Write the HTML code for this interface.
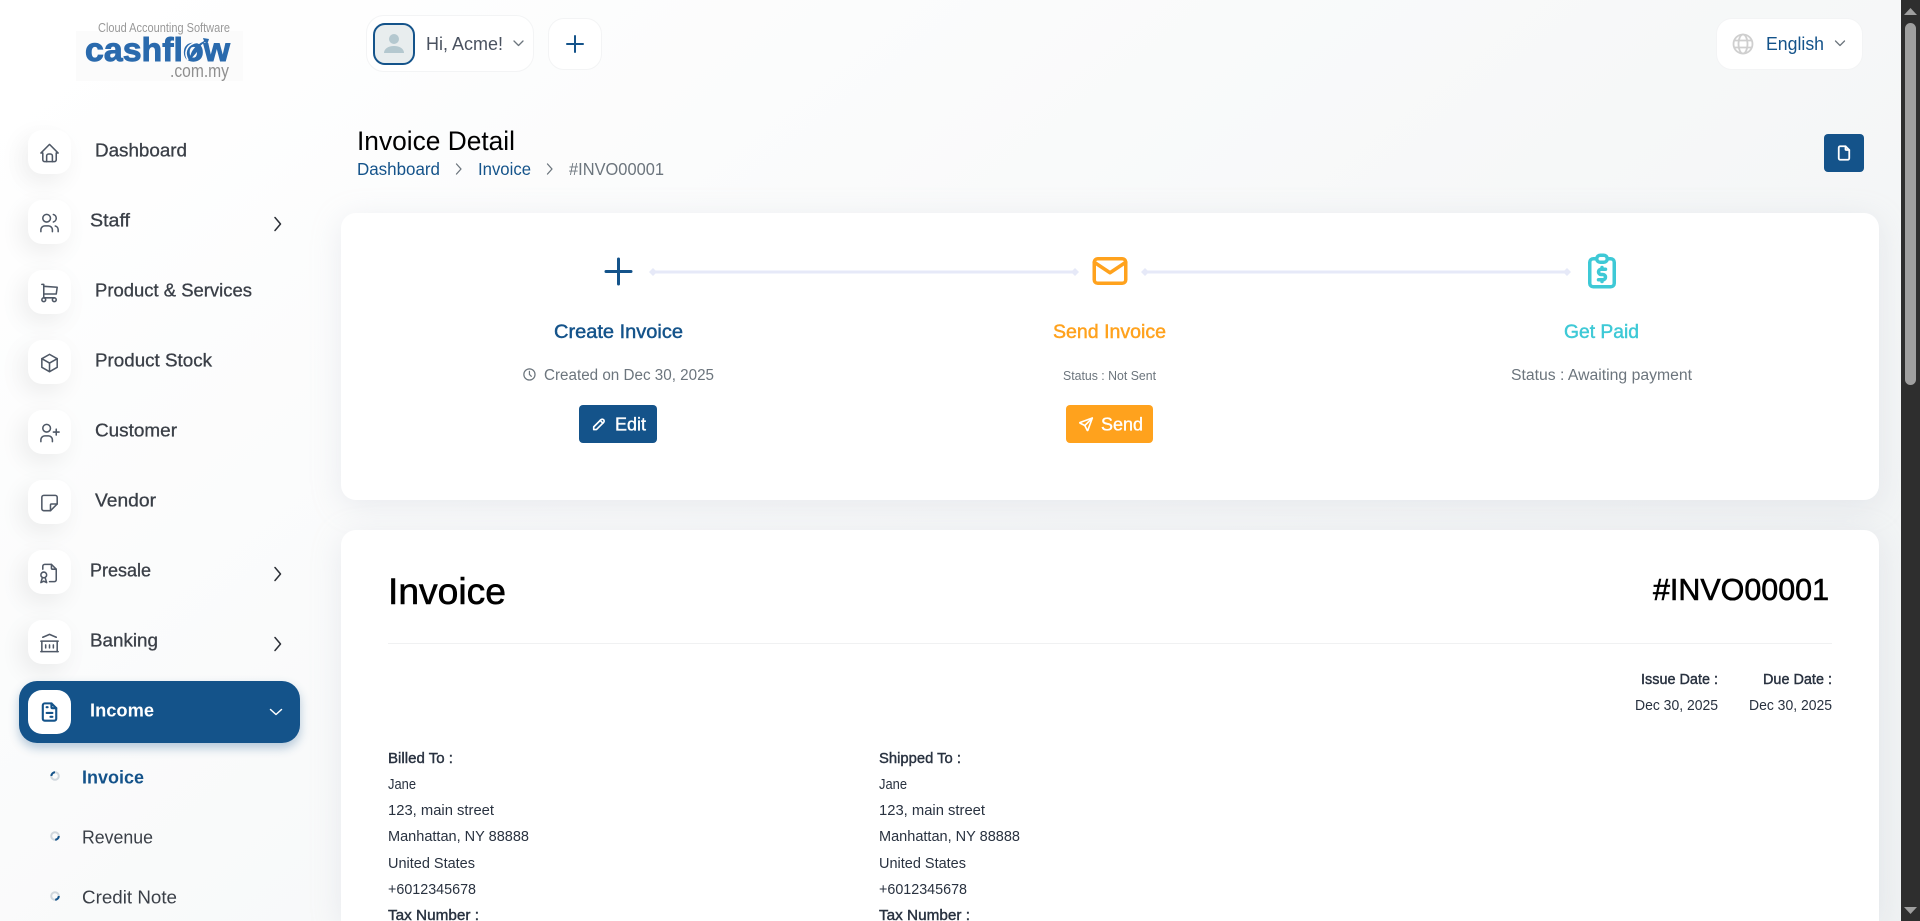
<!DOCTYPE html>
<html lang="en">
<head>
<meta charset="utf-8">
<title>Invoice Detail</title>
<style>
html,body{margin:0;padding:0;width:1920px;height:921px;overflow:hidden;background:#fff}
body{font-family:"Liberation Sans",sans-serif;position:relative}
#bg{position:absolute;left:0;top:0;width:1901px;height:921px;background:linear-gradient(141.55deg,#fff 3.46%,#edf0f1 99.86%) no-repeat 0 0/1901px 1300px}
.box{position:absolute;background:#fff}
.ic{width:43px;height:44px;left:28px;border-radius:14px;box-shadow:-6px 8px 24px rgba(0,0,0,.07)}
.card{border-radius:15px;box-shadow:0 6px 30px rgba(182,186,203,.25)}
#sb{position:absolute;left:1901px;top:0;width:19px;height:921px;background:#2e2e2e}
#thumb{position:absolute;left:4px;top:23px;width:11px;height:362px;border-radius:6px;background:#9f9f9f}
svg#o{position:absolute;left:0;top:0;overflow:hidden}
text{font-family:"Liberation Sans",sans-serif;fill:#293240}
.l{font-size:18px;fill:#3a3f47;stroke:#3a3f47;stroke-width:.3px}
.s{font-size:18px;fill:#3a3f47}
.r{font-size:15px;fill:#293240}
.b{font-size:14.500px;fill:#293240;stroke:#293240;stroke-width:.4px}
.i{fill:none;stroke:#4f5866;stroke-width:1.600;stroke-linecap:round;stroke-linejoin:round}
.t{fill:none;stroke-linecap:round;stroke-linejoin:round}
</style>
</head>
<body>
<div id="bg"></div>

<div class="box" style="left:76px;top:31px;width:167px;height:50px;background:#fbfbfb"></div>
<div class="box" style="left:366px;top:15px;width:166px;height:55px;border-radius:18px;border:1px solid #f3f4f5"></div>
<div class="box" style="left:373px;top:23px;width:38px;height:38px;border:2px solid #14538a;border-radius:12px;background:#e8edee"></div>
<div class="box" style="left:548px;top:18px;width:52px;height:50px;border-radius:16px;border:1px solid #f3f4f5"></div>
<div class="box" style="left:1716px;top:18px;width:145px;height:50px;border-radius:16px;border:1px solid #f3f4f5"></div>
<div class="box" style="left:1824px;top:134px;width:40px;height:38px;border-radius:4px;background:#14538a"></div>

<div class="box ic" style="top:130px"></div>
<div class="box ic" style="top:200px"></div>
<div class="box ic" style="top:270px"></div>
<div class="box ic" style="top:340px"></div>
<div class="box ic" style="top:410px"></div>
<div class="box ic" style="top:480px"></div>
<div class="box ic" style="top:550px"></div>
<div class="box ic" style="top:620px"></div>
<div class="box" style="left:19px;top:681px;width:281px;height:62px;border-radius:18px;background:#14538a;box-shadow:0 5px 10px rgba(20,83,138,.3)"></div>
<div class="box" style="left:28px;top:690px;width:43px;height:44px;border-radius:14px"></div>

<div class="box card" style="left:341px;top:213px;width:1538px;height:287px"></div>
<div class="box card" style="left:341px;top:530px;width:1538px;height:391px;border-radius:15px 15px 0 0"></div>
<div class="box" style="left:388px;top:643px;width:1444px;height:1px;background:#f0f1f2"></div>
<div class="box" style="left:579px;top:405px;width:78px;height:38px;border-radius:4px;background:#14538a"></div>
<div class="box" style="left:1066px;top:405px;width:87px;height:38px;border-radius:4px;background:#ffa21d"></div>

<svg id="o" width="1901" height="921" viewBox="0 0 1901 921" xmlns="http://www.w3.org/2000/svg">
  <!-- logo -->
  <text x="98" y="32" font-size="12.500" textLength="132" lengthAdjust="spacingAndGlyphs" style="fill:#999">Cloud Accounting Software</text>
  <text x="85" y="61" font-size="33" font-weight="700" textLength="145" lengthAdjust="spacingAndGlyphs" style="fill:#2a6aad;stroke:#2a6aad;stroke-width:.9px">cashflow</text>
  <path d="M188 60c-4-7-2-14 6-17l9-2" fill="none" stroke="#fff" stroke-width="1.600"/>
  <path d="M190 60c0-9 5-14 14-19l-1-3 6 1-2 6-2-3c-4 3-7 6-8 10" fill="#2a6aad"/>
  <text x="170" y="77" font-size="18" textLength="59" lengthAdjust="spacingAndGlyphs" style="fill:#8f8f8f">.com.my</text>

  <!-- top bar -->
  <circle cx="394" cy="39" r="5" fill="#b4c8cf"/>
  <path d="M384 53c0-4 4-7 10-7s10 3 10 7z" fill="#b4c8cf"/>
  <text x="426" y="50" font-size="18" textLength="77" lengthAdjust="spacingAndGlyphs" style="fill:#4a5260">Hi, Acme!</text>
  <path d="M514 41l4.500 4.500l4.500-4.500" class="t" stroke="#6c757d" stroke-width="1.300"/>
  <path d="M575 36v16M567 44h16" class="t" stroke="#14538a" stroke-width="2"/>
  <g fill="none" stroke="#cfcfcf" stroke-width="1.800">
    <circle cx="1743" cy="44" r="9.500"/>
    <ellipse cx="1743" cy="44" rx="4.500" ry="9.500"/>
    <path d="M1734 40.500h18M1734 47.500h18"/>
  </g>
  <text x="1766" y="50" font-size="18" textLength="58" lengthAdjust="spacingAndGlyphs" style="fill:#14538a">English</text>
  <path d="M1835.500 41l4.500 4.500l4.500-4.500" class="t" stroke="#6c757d" stroke-width="1.300"/>

  <!-- page head -->
  <text x="357" y="150" font-size="27" textLength="158" lengthAdjust="spacingAndGlyphs" style="fill:#000">Invoice Detail</text>
  <text x="357" y="175" font-size="17.500" textLength="83" lengthAdjust="spacingAndGlyphs" style="fill:#14538a">Dashboard</text>
  <path d="M456.500 164l4.500 5l-4.500 5" class="t" stroke="#6c757d" stroke-width="1.300"/>
  <text x="478" y="175" font-size="17.500" textLength="53" lengthAdjust="spacingAndGlyphs" style="fill:#14538a">Invoice</text>
  <path d="M547.500 164l4.500 5l-4.500 5" class="t" stroke="#6c757d" stroke-width="1.300"/>
  <text x="569" y="175" font-size="17.500" textLength="95" lengthAdjust="spacingAndGlyphs" style="fill:#6c757d">#INVO00001</text>
  <g transform="translate(1835 144) scale(.75)" class="t" stroke="#fff" stroke-width="2.400">
    <path d="M14 3v4a1 1 0 0 0 1 1h4"/>
    <path d="M17 21h-10a2 2 0 0 1 -2 -2v-14a2 2 0 0 1 2 -2h7l5 5v11a2 2 0 0 1 -2 2z"/>
  </g>

  <!-- sidebar icons -->
  <g transform="translate(38 141.500) scale(.96)" class="i">
    <path d="M5 12l-2 0l9 -9l9 9l-2 0"/><path d="M5 12v7a2 2 0 0 0 2 2h10a2 2 0 0 0 2 -2v-7"/><path d="M9 21v-6a2 2 0 0 1 2 -2h2a2 2 0 0 1 2 2v6"/>
  </g>
  <g transform="translate(38 211.500) scale(.96)" class="i">
    <circle cx="9" cy="7" r="4"/><path d="M3 21v-2a4 4 0 0 1 4 -4h4a4 4 0 0 1 4 4v2"/><path d="M16 3.130a4 4 0 0 1 0 7.750"/><path d="M21 21v-2a4 4 0 0 0 -3 -3.850"/>
  </g>
  <g transform="translate(38 281.500) scale(.96)" class="i">
    <circle cx="6" cy="19" r="2"/><circle cx="17" cy="19" r="2"/><path d="M17 17h-11v-14h-2"/><path d="M6 5l14 1l-1 7h-13"/>
  </g>
  <g transform="translate(38 351.500) scale(.96)" class="i">
    <path d="M12 3l8 4.500l0 9l-8 4.500l-8 -4.500l0 -9l8 -4.500"/><path d="M12 12l8 -4.500"/><path d="M12 12l0 9"/><path d="M12 12l-8 -4.500"/>
  </g>
  <g transform="translate(38 421.500) scale(.96)" class="i">
    <circle cx="9" cy="7" r="4"/><path d="M3 21v-2a4 4 0 0 1 4 -4h4a4 4 0 0 1 4 4v2"/><path d="M16 11h6m-3 -3v6"/>
  </g>
  <g transform="translate(38 491.500) scale(.96)" class="i">
    <path d="M13 20l7 -7"/><path d="M13 20v-6a1 1 0 0 1 1 -1h6v-7a2 2 0 0 0 -2 -2h-12a2 2 0 0 0 -2 2v12a2 2 0 0 0 2 2h7"/>
  </g>
  <g transform="translate(38 561.500) scale(.96)" class="i">
    <path d="M14 3v4a1 1 0 0 0 1 1h4"/><path d="M5 8v-3a2 2 0 0 1 2 -2h7l5 5v11a2 2 0 0 1 -2 2h-5"/><circle cx="6" cy="14" r="3"/><path d="M4.500 17l-1.500 5l3 -1.500l3 1.500l-1.500 -5"/>
  </g>
  <g transform="translate(38 631.500) scale(.96)" class="i">
    <path d="M3 21l18 0"/><path d="M3 10l18 0"/><path d="M5 6l7 -3l7 3"/><path d="M4 10l0 11"/><path d="M20 10l0 11"/><path d="M8 14l0 3"/><path d="M12 14l0 3"/><path d="M16 14l0 3"/>
  </g>
  <g transform="translate(38 700.500) scale(.96)" class="t" stroke="#14538a" stroke-width="2.200">
    <path d="M14 3v4a1 1 0 0 0 1 1h4"/><path d="M17 21h-10a2 2 0 0 1 -2 -2v-14a2 2 0 0 1 2 -2h7l5 5v11a2 2 0 0 1 -2 2z"/><path d="M9 7l1 0"/><path d="M9 13l6 0"/><path d="M13 17l2 0"/>
  </g>

  <!-- sidebar labels -->
  <text class="l" x="95" y="156.500" textLength="92" lengthAdjust="spacingAndGlyphs">Dashboard</text>
  <text class="l" x="90" y="226.500" textLength="40" lengthAdjust="spacingAndGlyphs">Staff</text>
  <text class="l" x="95" y="296.500" textLength="157" lengthAdjust="spacingAndGlyphs">Product &amp; Services</text>
  <text class="l" x="95" y="366.500" textLength="117" lengthAdjust="spacingAndGlyphs">Product Stock</text>
  <text class="l" x="95" y="436.500" textLength="82" lengthAdjust="spacingAndGlyphs">Customer</text>
  <text class="l" x="95" y="506.500" textLength="61" lengthAdjust="spacingAndGlyphs">Vendor</text>
  <text class="l" x="90" y="576.500" textLength="61" lengthAdjust="spacingAndGlyphs">Presale</text>
  <text class="l" x="90" y="646.500" textLength="68" lengthAdjust="spacingAndGlyphs">Banking</text>
  <text x="90" y="716.500" font-size="18" font-weight="700" textLength="64" lengthAdjust="spacingAndGlyphs" style="fill:#fff">Income</text>
  <path d="M275 217.500l5.500 6.500l-5.500 6.500M275 567.500l5.500 6.500l-5.500 6.500M275 637.500l5.500 6.500l-5.500 6.500" class="t" stroke="#2b2f36" stroke-width="1.500"/>
  <path d="M270.500 709.500l5.500 5l5.500-5" class="t" stroke="#fff" stroke-width="1.500"/>

  <!-- sub menu -->
  <g fill="none" stroke-width="2">
    <circle cx="55" cy="776" r="3.800" stroke="#cfd6dc"/>
    <path d="M51.400 776a3.800 3.800 0 0 1 3.600-3.800" stroke="#14538a"/>
    <circle cx="55" cy="836" r="3.800" stroke="#cfd6dc"/>
    <path d="M58.800 836a3.800 3.800 0 0 1-3.600 3.800" stroke="#14538a"/>
    <circle cx="55" cy="896" r="3.800" stroke="#cfd6dc"/>
    <path d="M58.800 896a3.800 3.800 0 0 1-3.600 3.800" stroke="#14538a"/>
  </g>
  <text x="82" y="783.500" font-size="18" font-weight="700" textLength="62" lengthAdjust="spacingAndGlyphs" style="fill:#14538a">Invoice</text>
  <text class="s" x="82" y="843.500" textLength="71" lengthAdjust="spacingAndGlyphs">Revenue</text>
  <text class="s" x="82" y="903.500" textLength="95" lengthAdjust="spacingAndGlyphs">Credit Note</text>

  <!-- stepper -->
  <path d="M606 271.500h25M618.500 259v25" class="t" stroke="#14538a" stroke-width="3"/>
  <g fill="#e6e9f8">
    <rect x="653" y="270.500" width="422" height="3"/>
    <path d="M649 272l4-4 4 4-4 4zM1071 272l4-4 4 4-4 4z"/>
    <rect x="1145" y="270.500" width="422" height="3"/>
    <path d="M1141 272l4-4 4 4-4 4zM1563 272l4-4 4 4-4 4z"/>
  </g>
  <g transform="translate(1089 250) scale(1.750)" class="t" stroke="#ffa21d" stroke-width="2">
    <path d="M3 7a2 2 0 0 1 2 -2h14a2 2 0 0 1 2 2v10a2 2 0 0 1 -2 2h-14a2 2 0 0 1 -2 -2v-10z"/><path d="M3 7l9 6l9 -6"/>
  </g>
  <g transform="translate(1581 250) scale(1.750)" class="t" stroke="#3ec9d6" stroke-width="2">
    <path d="M9 5h-2a2 2 0 0 0 -2 2v12a2 2 0 0 0 2 2h10a2 2 0 0 0 2 -2v-12a2 2 0 0 0 -2 -2h-2"/><path d="M9 5a2 2 0 0 1 2 -2h2a2 2 0 0 1 2 2v0a2 2 0 0 1 -2 2h-2a2 2 0 0 1 -2 -2z"/><path d="M14 11h-2.500a1.500 1.500 0 0 0 0 3h1a1.500 1.500 0 0 1 0 3h-2.500"/><path d="M12 17v1m0 -8v1"/>
  </g>
  <text x="554" y="338" font-size="19" textLength="129" lengthAdjust="spacingAndGlyphs" style="fill:#14538a;stroke:#14538a;stroke-width:.45px">Create Invoice</text>
  <text x="1053" y="338" font-size="19" textLength="113" lengthAdjust="spacingAndGlyphs" style="fill:#ffa21d;stroke:#ffa21d;stroke-width:.45px">Send Invoice</text>
  <text x="1564" y="338" font-size="19" textLength="75" lengthAdjust="spacingAndGlyphs" style="fill:#3ec9d6;stroke:#3ec9d6;stroke-width:.45px">Get Paid</text>
  <g transform="translate(522 367) scale(.62)" class="t" stroke="#6c757d" stroke-width="2">
    <path d="M3 12a9 9 0 1 0 18 0a9 9 0 0 0 -18 0"/><path d="M12 7v5l3 3"/>
  </g>
  <text x="544" y="380" font-size="15.500" textLength="170" lengthAdjust="spacingAndGlyphs" style="fill:#6c757d">Created on Dec 30, 2025</text>
  <text x="1063" y="380" font-size="12.500" textLength="93" lengthAdjust="spacingAndGlyphs" style="fill:#6c757d">Status : Not Sent</text>
  <text x="1511" y="380" font-size="15.500" textLength="181" lengthAdjust="spacingAndGlyphs" style="fill:#6c757d">Status : Awaiting payment</text>
  <g transform="translate(591 416) scale(.68)" class="t" stroke="#fff" stroke-width="2.400">
    <path d="M4 20h4l10.500 -10.500a2.828 2.828 0 1 0 -4 -4l-10.500 10.500v4"/><path d="M13.500 6.500l4 4"/>
  </g>
  <text x="615" y="430.500" font-size="18" textLength="31" lengthAdjust="spacingAndGlyphs" style="fill:#fff;stroke:#fff;stroke-width:.35px">Edit</text>
  <g transform="translate(1078 416) scale(.68)" class="t" stroke="#fff" stroke-width="2.400">
    <path d="M10 14l11 -11"/><path d="M21 3l-6.500 18a.55 .55 0 0 1 -1 0l-3.500 -7l-7 -3.500a.55 .55 0 0 1 0 -1l18 -6.500"/>
  </g>
  <text x="1101" y="430.500" font-size="18" textLength="42" lengthAdjust="spacingAndGlyphs" style="fill:#fff;stroke:#fff;stroke-width:.35px">Send</text>

  <!-- invoice card -->
  <text x="388" y="604" font-size="37" textLength="118" lengthAdjust="spacingAndGlyphs" style="fill:#000;stroke:#000;stroke-width:.6px">Invoice</text>
  <text x="1653" y="600" font-size="31" textLength="176" lengthAdjust="spacingAndGlyphs" style="fill:#000;stroke:#000;stroke-width:.6px">#INVO00001</text>
  <text class="b" x="1641" y="684" textLength="77" lengthAdjust="spacingAndGlyphs">Issue Date :</text>
  <text class="b" x="1763" y="684" textLength="69" lengthAdjust="spacingAndGlyphs">Due Date :</text>
  <text class="r" x="1635" y="710" textLength="83" lengthAdjust="spacingAndGlyphs">Dec 30, 2025</text>
  <text class="r" x="1749" y="710" textLength="83" lengthAdjust="spacingAndGlyphs">Dec 30, 2025</text>

  <text class="b" x="388" y="763" textLength="65" lengthAdjust="spacingAndGlyphs">Billed To :</text>
  <text class="r" x="388" y="789" textLength="28" lengthAdjust="spacingAndGlyphs">Jane</text>
  <text class="r" x="388" y="815" textLength="106" lengthAdjust="spacingAndGlyphs">123, main street</text>
  <text class="r" x="388" y="841" textLength="141" lengthAdjust="spacingAndGlyphs">Manhattan, NY 88888</text>
  <text class="r" x="388" y="868" textLength="87" lengthAdjust="spacingAndGlyphs">United States</text>
  <text class="r" x="388" y="894" textLength="88" lengthAdjust="spacingAndGlyphs">+6012345678</text>
  <text class="b" x="388" y="920" textLength="91" lengthAdjust="spacingAndGlyphs">Tax Number :</text>

  <text class="b" x="879" y="763" textLength="82" lengthAdjust="spacingAndGlyphs">Shipped To :</text>
  <text class="r" x="879" y="789" textLength="28" lengthAdjust="spacingAndGlyphs">Jane</text>
  <text class="r" x="879" y="815" textLength="106" lengthAdjust="spacingAndGlyphs">123, main street</text>
  <text class="r" x="879" y="841" textLength="141" lengthAdjust="spacingAndGlyphs">Manhattan, NY 88888</text>
  <text class="r" x="879" y="868" textLength="87" lengthAdjust="spacingAndGlyphs">United States</text>
  <text class="r" x="879" y="894" textLength="88" lengthAdjust="spacingAndGlyphs">+6012345678</text>
  <text class="b" x="879" y="920" textLength="91" lengthAdjust="spacingAndGlyphs">Tax Number :</text>
</svg>

<div id="sb">
  <svg width="19" height="921" style="position:absolute;left:0;top:0" xmlns="http://www.w3.org/2000/svg">
    <path d="M9.500 8l6.500 7h-13z" fill="#9f9f9f"/>
    <path d="M3 907h13l-6.500 7z" fill="#9f9f9f"/>
  </svg>
  <div id="thumb"></div>
</div>
</body>
</html>
